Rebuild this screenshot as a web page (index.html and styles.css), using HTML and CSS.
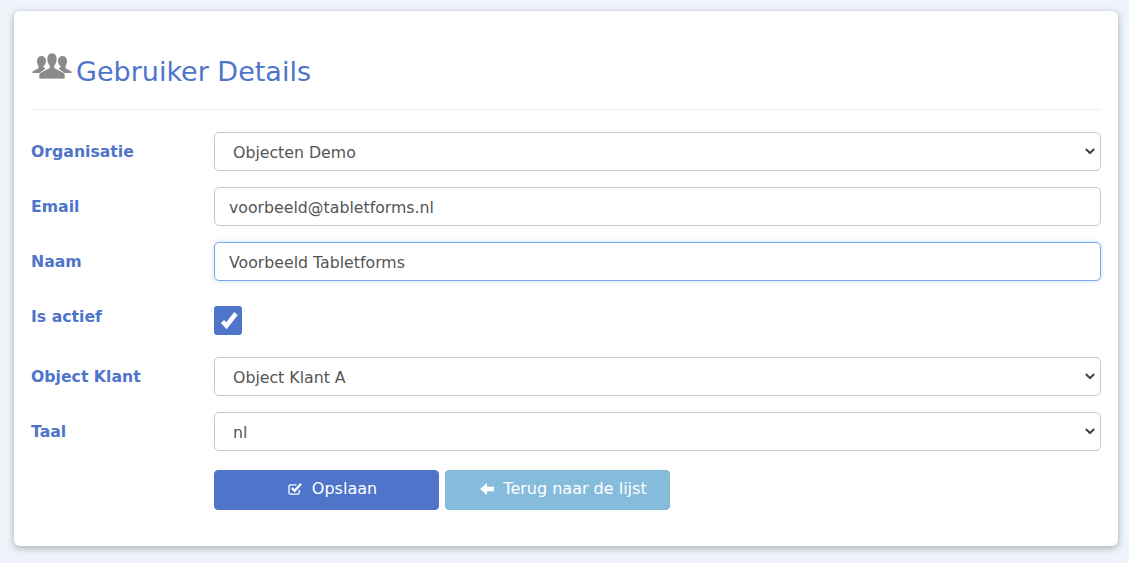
FILE: index.html
```html
<!DOCTYPE html>
<html lang="nl">
<head>
<meta charset="utf-8">
<title>Gebruiker Details</title>
<link rel="stylesheet" href="styles.css">
</head>
<body>
<main class="card">
  <h1 class="title">
    <svg class="title-icon" viewBox="0 0 40 26" width="40" height="26" aria-hidden="true">
      <path fill="#8a8a8a" d="M9.500 3c2.600 0 4.500 2 4.500 5 0 2-1 4-2.500 5.200v1l2 1.300-5.500 4.500H.5V18.500l6-3.300v-1.800C6 12 5 10 5 8c0-3 1.900-5 4.500-5z"/>
      <path fill="#8a8a8a" d="M30.500 3c-2.600 0-4.500 2-4.500 5 0 2 1 4 2.500 5.200v1l-2 1.300 5.500 4.500h7.500V18.500l-6-3.300v-1.800C34 12 35 10 35 8c0-3-1.900-5-4.500-5z"/>
      <path fill="#8a8a8a" stroke="#fff" stroke-width=".7" d="M20 0c3 0 5 2.600 5 6.200 0 2.500-.9 4.700-2.300 6.100v2.700l7.500 3.800c1.800.9 2.800 1.800 2.800 3V26H7v-4.200c0-1.200 1-2.100 2.800-3l7.500-3.800v-2.700C15.900 10.900 15 8.700 15 6.200 15 2.600 17 0 20 0z"/>
    </svg>
    <span>Gebruiker Details</span>
  </h1>
  <hr class="divider">
  <form class="form">
    <div class="row">
      <label class="label">Organisatie</label>
      <select class="control select"><option>Objecten Demo</option></select>
    </div>
    <div class="row">
      <label class="label">Email</label>
      <input class="control" type="text" value="voorbeeld@tabletforms.nl">
    </div>
    <div class="row">
      <label class="label">Naam</label>
      <input class="control focused" type="text" value="Voorbeeld Tabletforms">
    </div>
    <div class="row row-check">
      <label class="label">Is actief</label>
      <span class="checkbox">
        <svg viewBox="0 0 28 29" width="28" height="29" aria-hidden="true">
          <path fill="none" stroke="#fff" stroke-width="4.500" d="M8.500 15.500l4 4.200 9.500-12.200"/>
        </svg>
      </span>
    </div>
    <div class="row">
      <label class="label">Object Klant</label>
      <select class="control select"><option>Object Klant A</option></select>
    </div>
    <div class="row">
      <label class="label">Taal</label>
      <select class="control select"><option>nl</option></select>
    </div>
    <div class="row row-actions">
      <span></span>
      <div class="actions">
        <button class="btn btn-primary" type="button">
          <svg viewBox="0 0 16 14" width="15" height="13" aria-hidden="true">
            <path fill="none" stroke="#fff" stroke-width="1.400" d="M12 8.500V11.500a1.500 1.500 0 0 1-1.500 1.500H2.500A1.500 1.500 0 0 1 1 11.500V4.500A1.500 1.500 0 0 1 2.500 3H9"/>
            <path fill="none" stroke="#fff" stroke-width="2.400" d="M4 6.500l3 3 7-7.500"/>
          </svg>
          <span>Opslaan</span>
        </button>
        <button class="btn btn-info" type="button">
          <svg viewBox="0 0 14 12" width="14" height="12" aria-hidden="true">
            <path fill="#fff" d="M7 0v3.800h7v4.400H7V12L0 6z"/>
          </svg>
          <span>Terug naar de lijst</span>
        </button>
      </div>
    </div>
  </form>
</main>
</body>
</html>
```

FILE: styles.css
```css
* { box-sizing: border-box; }
html, body { height: 100%; }
body {
  margin: 0;
  padding: 11px 11px 17px 14px;
  background: #eef4f9;
  font-family: "DejaVu Sans", sans-serif;
  overflow: hidden;
}
.card {
  height: 535px;
  padding: 0 17px 0 16px;
  background: #fff;
  border-radius: 6px;
  box-shadow: 0 2px 7px rgba(50, 60, 70, 0.4);
}
.title {
  display: flex;
  align-items: center;
  gap: 4px;
  height: 98px;
  margin: 0;
  padding: 22px 0 0 2px;
  color: #4f75cb;
  font-size: 27px;
  font-weight: 400;
}
.title-icon { margin-bottom: 10px; flex: none; }
.divider {
  height: 1px;
  margin: 0 0 22px;
  border: 0;
  background: #eceeef;
}
.form { display: flex; flex-direction: column; }
.row {
  display: grid;
  grid-template-columns: 184px 1fr;
  height: 38px;
  margin-bottom: 17px;
}
.row-check { height: 43px; }
.row-actions { height: 40px; margin: 3px 0 0; }
.label {
  padding: 9px 0 0 1px;
  color: #4f75cb;
  font-size: 15.700px;
  font-weight: 700;
  line-height: 21px;
}
.control {
  width: 100%;
  height: 38.500px;
  padding: 2px 14px 0;
  border: 1px solid #c8c8c8;
  border-radius: 5px;
  background: #fff;
  color: #555;
  font: 15.750px "DejaVu Sans", sans-serif;
  outline: none;
}
.select {
  padding-left: 18px;
  appearance: none;
  -webkit-appearance: none;
  background-image: url("data:image/svg+xml,%3Csvg xmlns='http://www.w3.org/2000/svg' width='10' height='7' viewBox='0 0 10 7'%3E%3Cpath fill='none' stroke='%23444' stroke-width='2' d='M.8 1l4.200 4 4.200-4'/%3E%3C/svg%3E");
  background-repeat: no-repeat;
  background-position: right 5px center;
}
.focused {
  border-color: #7aa9ea;
  box-shadow: 0 0 4px rgba(90, 150, 240, 0.35);
}
.checkbox {
  display: block;
  width: 28px;
  height: 29px;
  margin-top: 9px;
  border-radius: 3px;
  background: #4f75cb;
}
.checkbox svg { display: block; }
.actions { display: flex; gap: 6px; }
.btn {
  display: flex;
  align-items: center;
  justify-content: center;
  gap: 9px;
  width: 225px;
  height: 40px;
  padding: 0 0 3px 12px;
  border-radius: 4px;
  color: #fff;
  font: 16px "DejaVu Sans", sans-serif;
}
.btn-primary { border: 1px solid #4f75cb; background: #4f75cb; }
.btn-info { border: 1px solid #7fb5d6; background: #86bcdb; }
```
